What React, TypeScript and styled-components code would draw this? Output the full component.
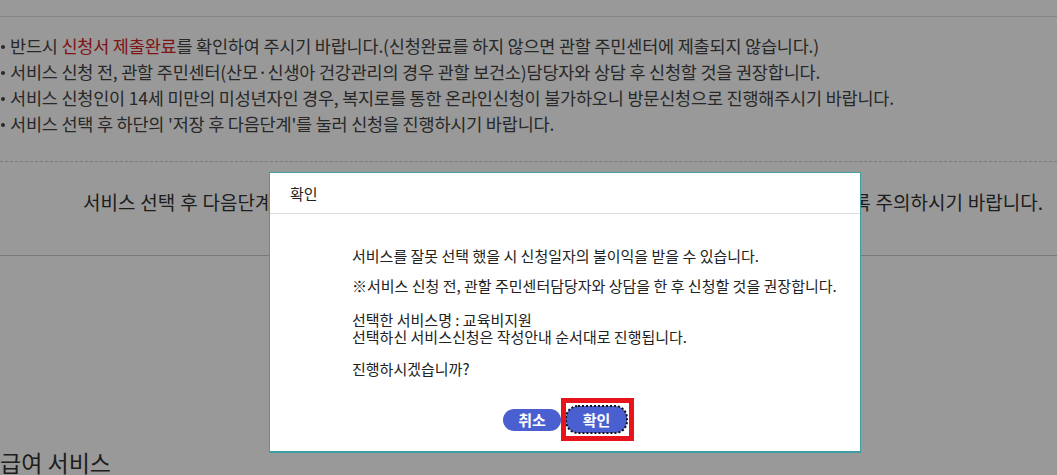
import React, { JSX } from 'react';
import styled, { createGlobalStyle } from 'styled-components';

const GlobalStyle = createGlobalStyle`
  html, body {
    margin: 0;
    padding: 0;
    background: #fff;
    overflow: hidden;
  }
  body {
    font-family: "Noto Sans CJK KR", "Noto Sans", sans-serif;
    color: #444;
  }
`;

const Page = styled.div`
  width: 1057px;
  height: 475px;
  overflow: hidden;
`;

const TopRule = styled.div`
  height: 16px;
  border-bottom: 1px solid #ddd;
`;

const NoticeList = styled.ul`
  list-style: none;
  margin: 0;
  padding: 16px 0 24px;
  border-bottom: 1px dashed #ccc;
`;

const NoticeItem = styled.li`
  position: relative;
  padding-left: 10px;
  font-size: 17.5px;
  line-height: 26px;
  letter-spacing: -0.2px;
  white-space: nowrap;

  &::before {
    content: '';
    position: absolute;
    left: 1px;
    top: 12px;
    width: 4px;
    height: 4px;
    border-radius: 50%;
    background: #444;
  }
`;

const Highlight = styled.span`
  color: #d42424;
`;

const CautionRule = styled.div`
  border-bottom: 1px solid #ccc;
`;

const Caution = styled.p`
  margin: 0 0 0 83px;
  width: 960px;
  padding: 26px 0 40px;
  font-size: 19px;
  line-height: 27px;
  text-align: justify;
  text-align-last: justify;
  color: #333;
`;

const SectionTitle = styled.h2`
  margin: 191px 0 0;
  font-size: 23px;
  font-weight: 400;
  line-height: 30px;
  color: #333;
`;

const Overlay = styled.div`
  position: fixed;
  inset: 0;
  background: rgba(0, 0, 0, 0.4);
`;

const Dialog = styled.div`
  position: fixed;
  left: 269px;
  top: 172px;
  width: 590px;
  height: 278px;
  background: #fff;
  border: 1px solid #3f9ea2;
  border-bottom-width: 2px;
  display: flex;
  flex-direction: column;
  color: #222;
`;

const DialogHeader = styled.div`
  height: 40px;
  padding: 0 20px;
  display: flex;
  align-items: center;
  font-size: 15px;
  border-bottom: 1px solid #ddd;
`;

const DialogBody = styled.div`
  flex: 1;
  padding: 33px 0 0 82px;
  font-size: 15px;
  line-height: 17px;
`;

const Para = styled.p<{ $gap: number }>`
  margin: 0 0 ${(p) => p.$gap}px;
`;

const ButtonRow = styled.div`
  display: flex;
  justify-content: center;
  align-items: center;
  gap: 5px;
  padding-bottom: 18px;
`;

const RoundButton = styled.button<{ $focused?: boolean }>`
  border: none;
  border-radius: 12px;
  background: #4a5fd0;
  color: #fff;
  font-family: inherit;
  font-size: 15px;
  font-weight: 700;
  height: ${(p) => (p.$focused ? '27px' : '22px')};
  width: ${(p) => (p.$focused ? '61px' : '58px')};
  padding: 0;
  line-height: 1;
  outline: ${(p) => (p.$focused ? '2px dotted #111' : 'none')};
  outline-offset: -1px;
`;

/* red annotation ring drawn over the focused button */
const FocusMark = styled.span`
  position: relative;
  display: inline-flex;

  &::after {
    content: '';
    position: absolute;
    left: -5px;
    right: -7px;
    top: -8px;
    bottom: -8px;
    border: 5px solid #e8141c;
    pointer-events: none;
  }
`;

function App(): JSX.Element {
  return (
    <>
      <GlobalStyle />
      <Page>
        <TopRule />
        <NoticeList>
          <NoticeItem>
            반드시 <Highlight>신청서 제출완료</Highlight>를 확인하여 주시기 바랍니다.(신청완료를 하지 않으면 관할 주민센터에 제출되지 않습니다.)
          </NoticeItem>
          <NoticeItem>서비스 신청 전, 관할 주민센터(산모·신생아 건강관리의 경우 관할 보건소)담당자와 상담 후 신청할 것을 권장합니다.</NoticeItem>
          <NoticeItem>서비스 신청인이 14세 미만의 미성년자인 경우, 복지로를 통한 온라인신청이 불가하오니 방문신청으로 진행해주시기 바랍니다.</NoticeItem>
          <NoticeItem>서비스 선택 후 하단의 '저장 후 다음단계'를 눌러 신청을 진행하시기 바랍니다.</NoticeItem>
        </NoticeList>
        <CautionRule>
          <Caution>
            서비스 선택 후 다음단계로 진행하시면 서비스 변경이 불가하오니 신중히 선택하시어 불이익이 없도록 주의하시기 바랍니다.
          </Caution>
        </CautionRule>
        <SectionTitle>급여 서비스</SectionTitle>
      </Page>
      <Overlay />
      <Dialog role="dialog">
        <DialogHeader>확인</DialogHeader>
        <DialogBody>
          <Para $gap={13}>서비스를 잘못 선택 했을 시 신청일자의 불이익을 받을 수 있습니다.</Para>
          <Para $gap={17}>※서비스 신청 전, 관할 주민센터담당자와 상담을 한 후 신청할 것을 권장합니다.</Para>
          <Para $gap={15}>
            선택한 서비스명 : 교육비지원
            <br />
            선택하신 서비스신청은 작성안내 순서대로 진행됩니다.
          </Para>
          <Para $gap={0}>진행하시겠습니까?</Para>
        </DialogBody>
        <ButtonRow>
          <RoundButton>취소</RoundButton>
          <FocusMark>
            <RoundButton $focused>확인</RoundButton>
          </FocusMark>
        </ButtonRow>
      </Dialog>
    </>
  );
}

export default App;
